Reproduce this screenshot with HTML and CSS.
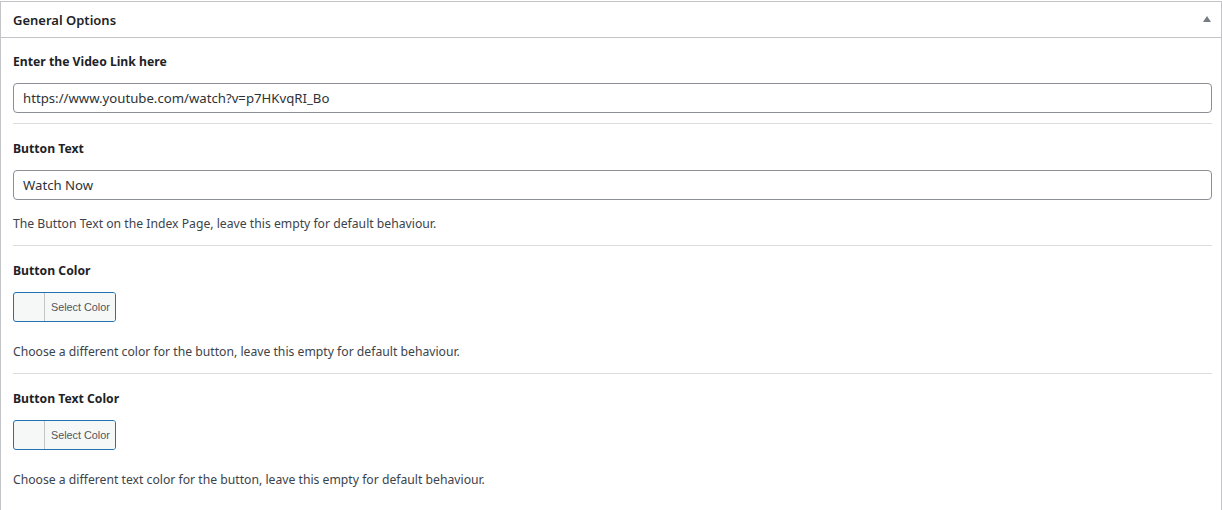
FILE: index.html
```html
<!DOCTYPE html>
<html>
<head>
<meta charset="utf-8">
<link rel="stylesheet" href="styles.css">
</head>
<body>
<div class="postbox">
  <div class="postbox-header">
    <h2 class="postbox-title">General Options</h2>
    <svg class="toggle" width="8" height="6" viewBox="0 0 8 6"><polygon points="4,0 8,6 0,6" fill="#787c82"/></svg>
  </div>
  <div class="inside">
    <div class="field field-first">
      <label class="field-label">Enter the Video Link here</label>
      <input class="text-input" type="text" value="https://www.youtube.com/watch?v=p7HKvqRI_Bo">
    </div>
    <div class="field">
      <label class="field-label">Button Text</label>
      <input class="text-input" type="text" value="Watch Now">
      <p class="description">The Button Text on the Index Page, leave this empty for default behaviour.</p>
    </div>
    <div class="field">
      <label class="field-label">Button Color</label>
      <button class="color-result" type="button"><span class="color-swatch"></span><span class="color-text">Select Color</span></button>
      <p class="description desc-after-color">Choose a different color for the button, leave this empty for default behaviour.</p>
    </div>
    <div class="field field-last">
      <label class="field-label">Button Text Color</label>
      <button class="color-result" type="button"><span class="color-swatch"></span><span class="color-text">Select Color</span></button>
      <p class="description desc-after-color">Choose a different text color for the button, leave this empty for default behaviour.</p>
    </div>
  </div>
</div>
</body>
</html>
```
FILE: styles.css
```css
* { box-sizing: border-box; }
html, body { margin: 0; padding: 0; background: #fff; }
body {
  padding-top: 1px;
  font-family: "Noto Sans", "Open Sans", sans-serif;
  font-size: 12.2px;
  color: #1d2327;
}
.postbox {
  width: 1222px;
  border: 1px solid #c3c4c7;
  border-bottom: none;
  background: #fff;
  min-height: 509px;
}
.postbox-header {
  height: 36px;
  border-bottom: 1px solid #c3c4c7;
  display: flex;
  align-items: center;
  justify-content: space-between;
  padding: 0 10px 0 12px;
}
.postbox-title {
  margin: 0;
  font-size: 13px;
  font-weight: 600;
  line-height: 20px;
  color: #1d2327;
}
.toggle { display: block; margin-top: -1px; }
.inside { padding: 0 9px 0 12px; }
.field {
  padding: 14px 0 10px;
  border-bottom: 1px solid #dcdcde;
  display: flex;
  flex-direction: column;
  align-items: flex-start;
}
.field-first { padding-top: 13px; }
.field-last { border-bottom: none; }
.field-label {
  display: block;
  font-weight: 700;
  line-height: 20px;
  padding-top: 1px;
  margin-bottom: 11px;
}
.text-input {
  width: 100%;
  height: 30px;
  border: 1px solid #8c8f94;
  border-radius: 4px;
  padding: 0 8px 1px 9px;
  font-family: inherit;
  font-size: 13.2px;
  color: #2c3338;
  background: #fff;
  outline: none;
}
.description {
  margin: 14px 0 1px;
  line-height: 20px;
  color: #3c434a;
}
.desc-after-color { margin-top: 20px; }
.color-result {
  display: flex;
  height: 30px;
  padding: 0;
  border: 1px solid #2271b1;
  border-radius: 3px;
  background: #f6f7f7;
  cursor: pointer;
  overflow: hidden;
}
.color-swatch { width: 30px; height: 100%; }
.color-text {
  border-left: 1px solid #c3c4c7;
  padding: 0 5px 0 6px;
  font-family: inherit;
  font-size: 10.8px;
  line-height: 28px;
  color: #50575e;
  background: #f6f7f7;
}
```
